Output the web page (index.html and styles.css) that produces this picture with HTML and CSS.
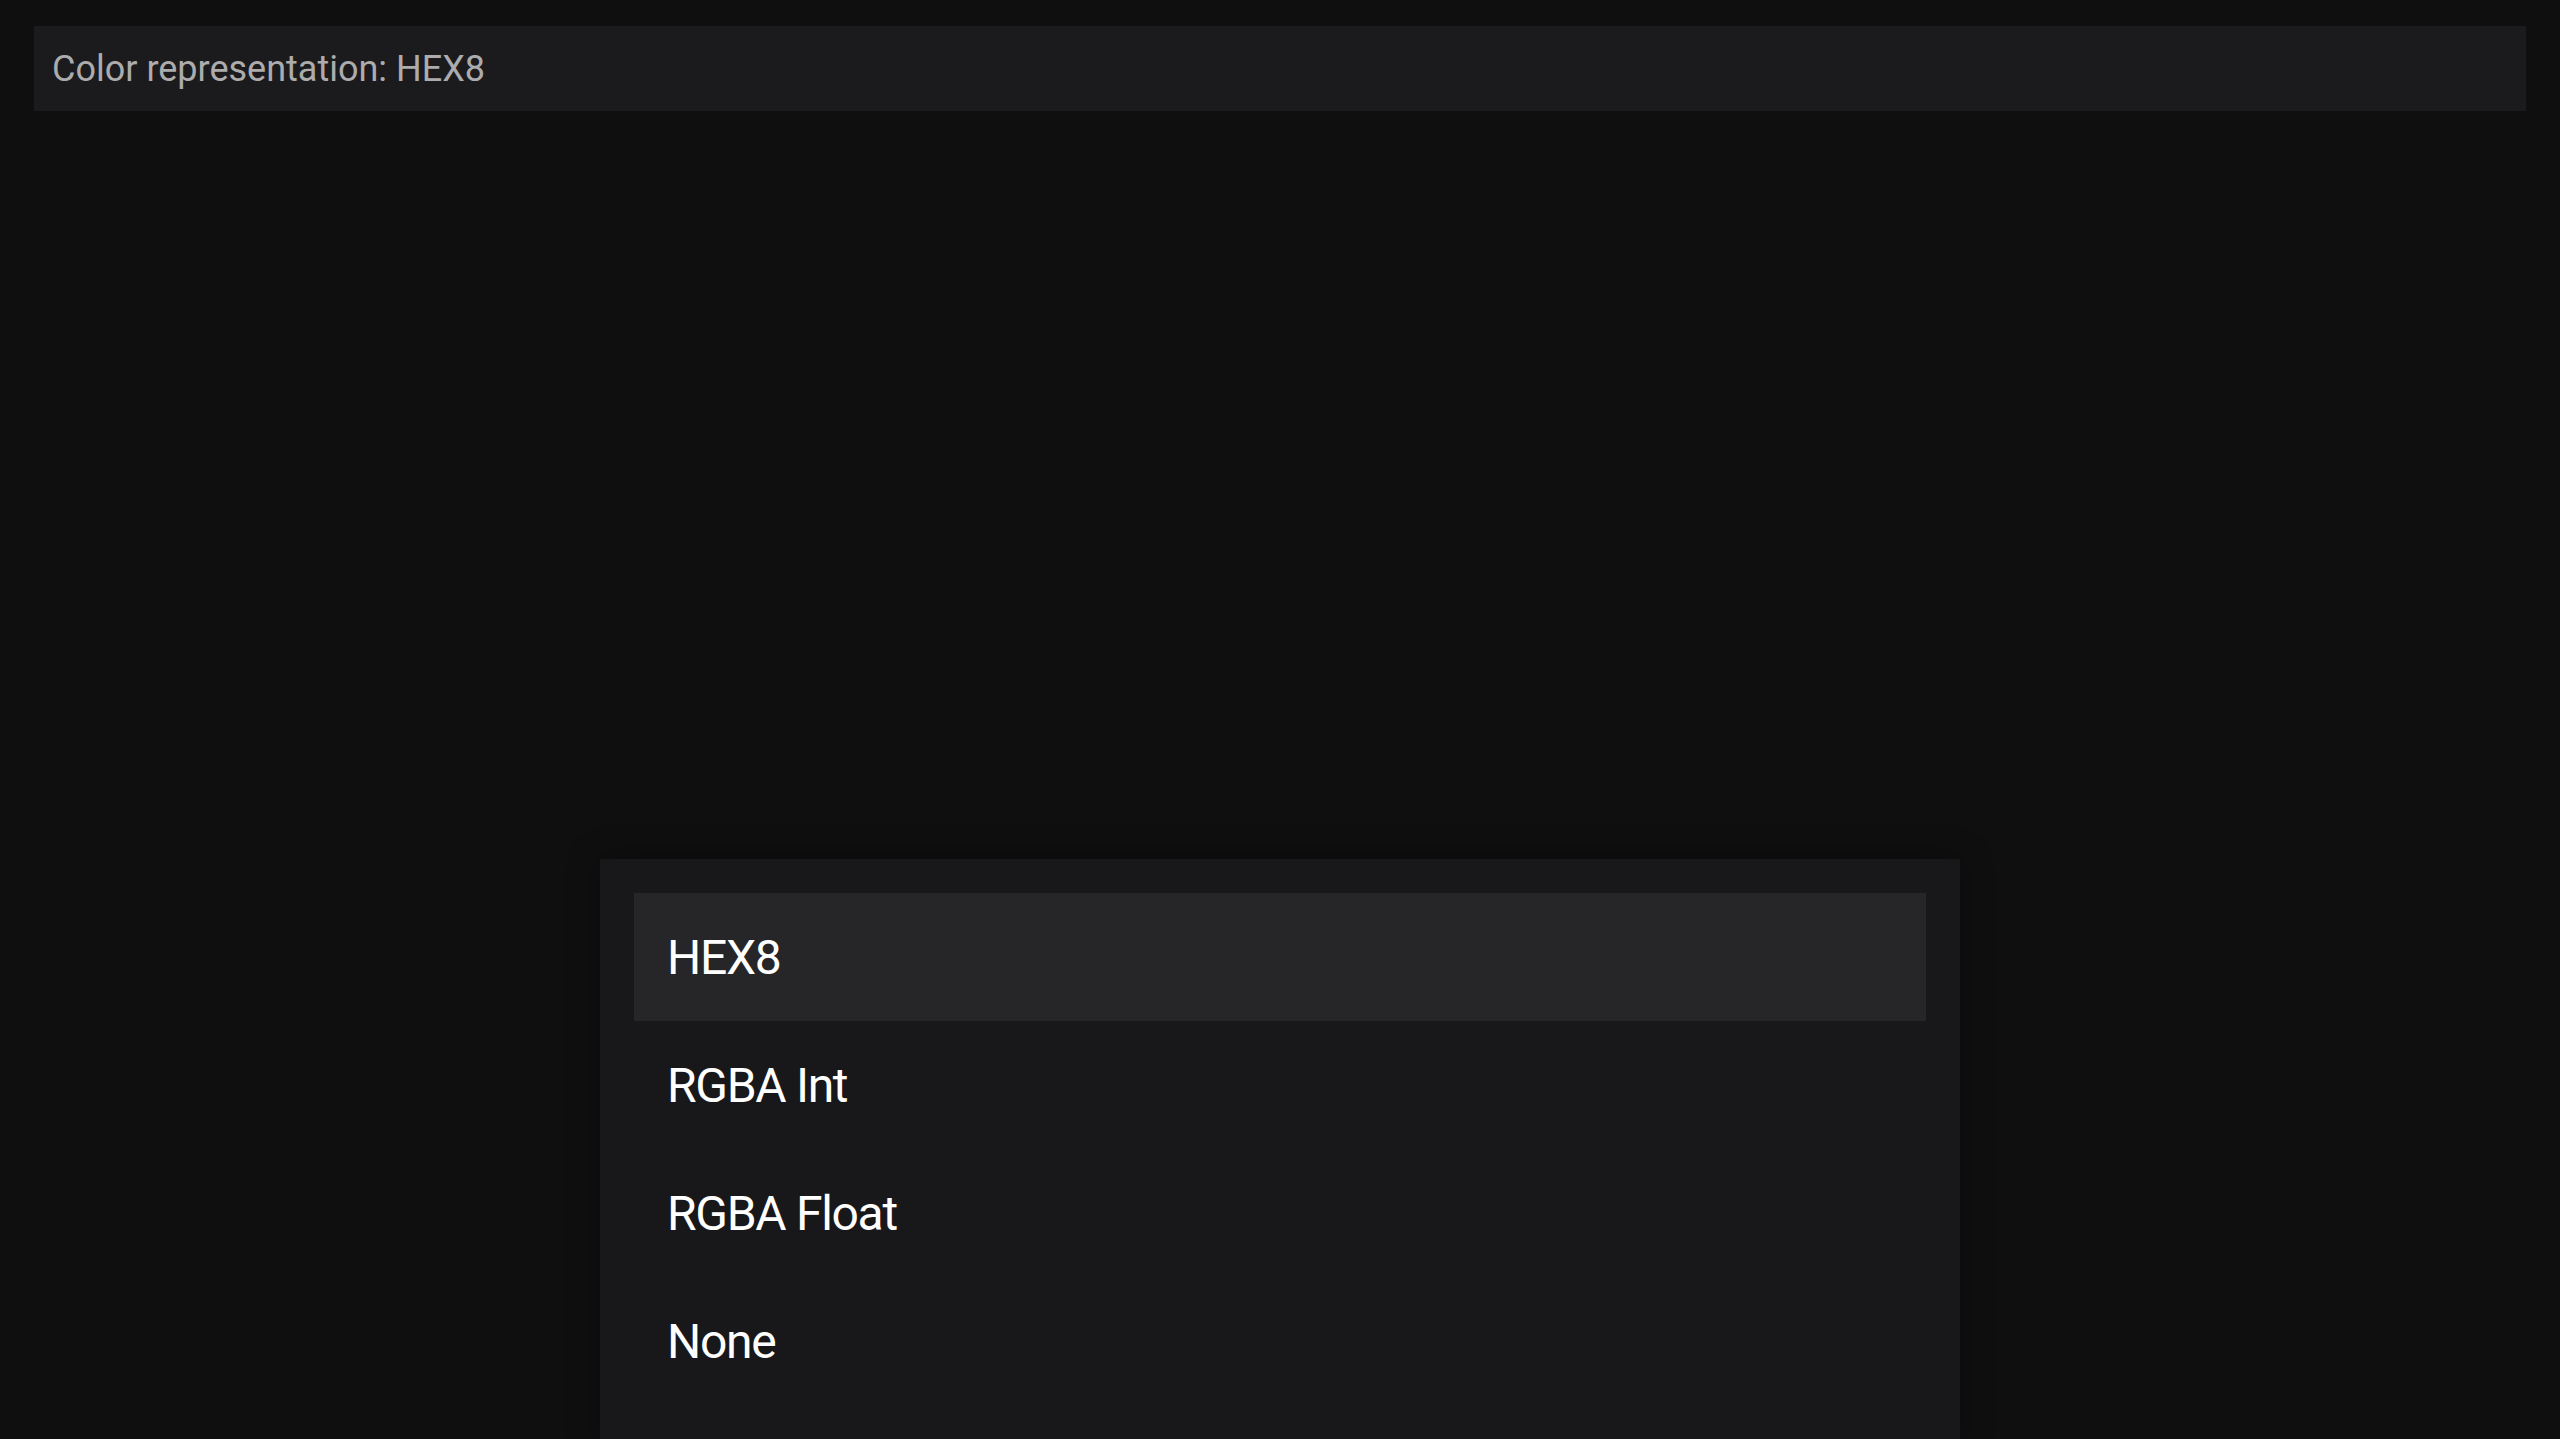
FILE: index.html
```html
<!DOCTYPE html>
<html lang="en">
<head>
<meta charset="utf-8">
<title>Color representation</title>
<link rel="stylesheet" href="styles.css">
</head>
<body>
<div class="topbar">Color representation: HEX8</div>
<div class="spacer"></div>
<div class="sheet">
  <div class="item selected">HEX8</div>
  <div class="item">RGBA Int</div>
  <div class="item">RGBA Float</div>
  <div class="item">None</div>
</div>
</body>
</html>
```
FILE: styles.css
```css
html, body {
  margin: 0;
  height: 100%;
}
body {
  background: #0f0f10;
  font-family: Roboto, "Noto Sans", sans-serif;
  display: flex;
  flex-direction: column;
  overflow: hidden;
}
.topbar {
  margin: 26px 34px 0 34px;
  height: 85px;
  padding-left: 18px;
  display: flex;
  align-items: center;
  background: #1b1b1d;
  color: #acacad;
  font-size: 36px;
}
.spacer {
  flex: 1;
}
.sheet {
  align-self: center;
  width: 1292px;
  padding: 34px;
  background: #18181a;
  box-shadow: 0 0 30px rgba(0, 0, 0, 0.35);
  display: flex;
  flex-direction: column;
}
.item {
  height: 128px;
  padding-left: 33px;
  display: flex;
  align-items: center;
  color: #ffffff;
  font-size: 48px;
  letter-spacing: -1.3px;
}
.item.selected {
  background: #262628;
}
```
